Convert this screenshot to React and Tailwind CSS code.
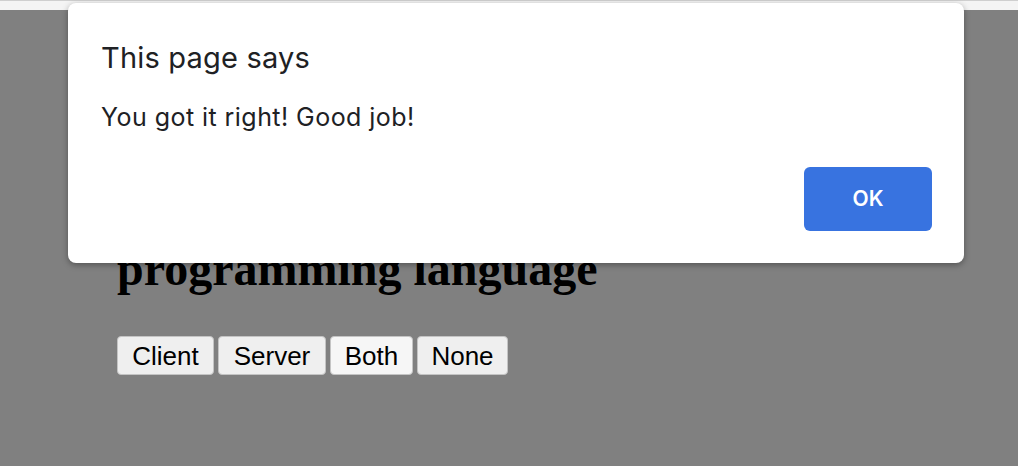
export default function App() {
  const btn =
    "h-[39px] rounded-[4px] border border-[#c4c4c4] bg-[#efefef] text-black text-[26px] leading-none font-['Liberation_Sans',Arial,sans-serif]";
  return (
    <div className="relative w-[1018px] h-[466px] overflow-hidden bg-[#808080]">
      <div className="h-[10px] bg-[#f4f4f4] border-t border-[#cfcfcf]" />
      <div className="pl-[117px] pt-[231px]">
        <h1 className="text-[48px] leading-[55px] font-bold text-black font-['Liberation_Serif','Times_New_Roman',serif]">
          programming language
        </h1>
        <div className="mt-[40px] flex gap-[4px]">
          <button className={btn + " w-[97px]"}>Client</button>
          <button className={btn + " w-[108px]"}>Server</button>
          <button className={btn + " w-[83px] bg-[#f6f6f6]"}>Both</button>
          <button className={btn + " w-[91px]"}>None</button>
        </div>
      </div>

      <div className="absolute left-[68px] top-[3px] w-[896px] h-[260px] rounded-[8px] bg-white shadow-[0_2px_6px_rgba(0,0,0,0.35)] font-['Inter','Noto_Sans',sans-serif] text-[#202124]">
        <div className="pl-[33px] pt-[37px]">
          <div className="text-[29px] leading-[36px] tracking-[0.2px]">This page says</div>
          <div className="mt-[25px] text-[25px] leading-[32px] tracking-[0.45px]">You got it right! Good job!</div>
        </div>
        <button className="absolute right-[32px] bottom-[32px] w-[128px] h-[64px] rounded-[6px] bg-[#3873e0] text-white text-[21px] font-semibold">
          OK
        </button>
      </div>
    </div>
  );
}
